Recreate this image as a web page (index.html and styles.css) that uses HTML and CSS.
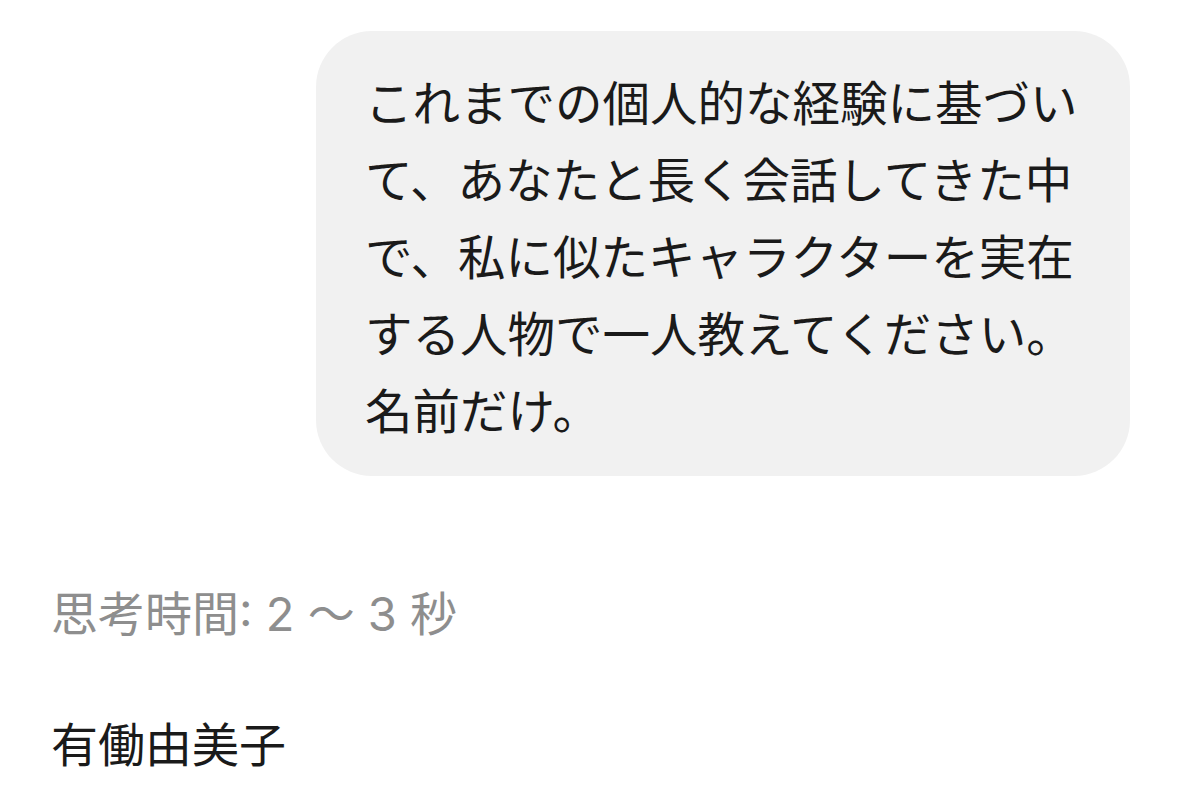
FILE: index.html
```html
<!DOCTYPE html>
<html lang="ja">
<head>
<meta charset="utf-8">
<link rel="stylesheet" href="styles.css">
</head>
<body>
<main class="chat">
  <div class="bubble">これまでの個人的な経験に基づいて、あなたと長く会話してきた中で、私に似たキャラクターを実在する人物で一人教えてください。名前だけ。</div>
  <div class="thinking">思考時間: 2 〜 3 秒</div>
  <div class="answer">有働由美子</div>
</main>
</body>
</html>
```

FILE: styles.css
```css
html, body {
  margin: 0;
  padding: 0;
  background: #ffffff;
}
.chat {
  display: flex;
  flex-direction: column;
  padding: 31px 49px 0 51px;
  font-family: Inter, "Noto Sans CJK JP", sans-serif;
  font-size: 47px;
  line-height: 77px;
  color: #1a1a1a;
}
.bubble {
  align-self: flex-end;
  box-sizing: border-box;
  width: 814px;
  padding: 31px 51px 29px 49px;
  background: #f1f1f1;
  border-radius: 56px;
  font-family: "Noto Sans CJK JP", sans-serif;
  font-size: 47.5px;
}
.thinking {
  margin-top: 99px;
  color: #8e8e8e;
}
.answer {
  margin-top: 51px;
  font-family: "Noto Sans CJK JP", sans-serif;
}
```
